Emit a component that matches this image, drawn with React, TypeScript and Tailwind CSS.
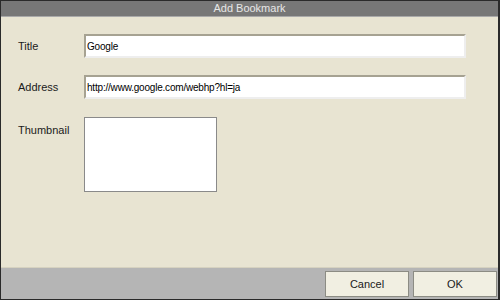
import React from 'react';

const font = { fontFamily: '"Liberation Sans", "Noto Sans CJK JP", sans-serif' };

function Field({ value }: { value: string }) {
  return (
    <div className="h-[24px] w-[382px] bg-white border-t-2 border-l-2 border-r-2 border-b-2 border-t-[#a6a292] border-l-[#a6a292] border-r-[#eeeeee] border-b-[#eeeeee] flex items-center pl-[1px] text-[10px] tracking-[-0.2px] text-black">
      {value}
    </div>
  );
}

export default function App() {
  return (
    <div className="w-[500px] h-[300px] flex flex-col bg-[#2a2a2a] p-[1px] pr-[2px]" style={font}>
      {/* title bar */}
      <div className="h-[15px] bg-[#777777] flex items-center justify-center text-[11px] text-[#e6e6e6] leading-none">
        Add Bookmark
      </div>
      <div className="h-[1px] bg-[#a9a9a9]" />

      {/* form */}
      <div className="flex-1 bg-[#e8e4d2] pl-[17px] pt-[17px] flex flex-col text-[11px] text-[#1a1a1a]">
        <div className="flex items-center h-[24px]">
          <div className="w-[66px]">Title</div>
          <Field value="Google" />
        </div>
        <div className="flex items-center h-[24px] mt-[17px]">
          <div className="w-[66px]">Address</div>
          <Field value="http://www.google.com/webhp?hl=ja" />
        </div>
        <div className="flex items-start mt-[18px]">
          <div className="w-[66px] pt-[6px] leading-[14px]">Thumbnail</div>
          <div className="w-[133px] h-[75px] bg-white border border-[#8a8a8a]" />
        </div>
      </div>

      {/* footer */}
      <div className="h-[1px] bg-[#d6d2c0]" />
      <div className="h-[31px] bg-[#b5b5b5] flex items-start justify-end gap-[4px] pt-[3px] pr-[1px]">
        <button className="w-[84px] h-[26px] bg-[#f1efe2] border border-[#8c8c84] text-[11px] text-[#1a1a1a]">
          Cancel
        </button>
        <button className="w-[84px] h-[26px] bg-[#f1efe2] border border-[#8c8c84] text-[11px] text-[#1a1a1a]">
          OK
        </button>
      </div>
    </div>
  );
}
